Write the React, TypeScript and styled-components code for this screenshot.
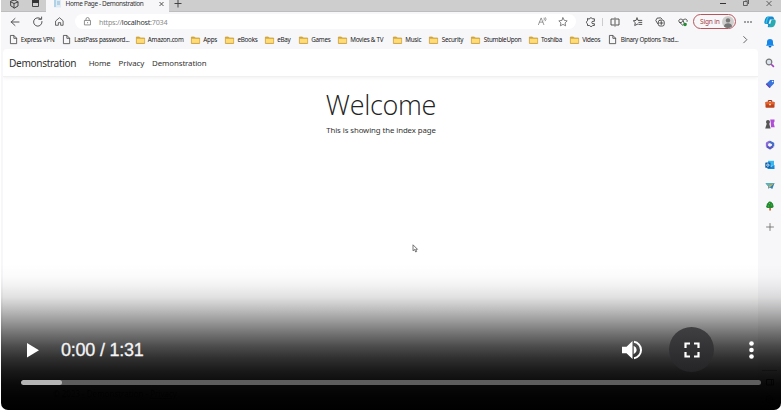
import React from "react";
import styled, { createGlobalStyle } from "styled-components";

const Global = createGlobalStyle`
  * { box-sizing: border-box; }
  body { margin: 0; background: #fff; font-family: "Noto Sans", "Open Sans", sans-serif; color: #333; }
  svg { display: block; flex: none; overflow: visible; }
`;

const Player = styled.div`
  position: relative;
  width: 780px;
  height: 410px;
  margin-left: 1px;
  overflow: hidden;
  border-radius: 0 0 7px 7px;
  background: #f7f7f9;
  display: flex;
  flex-direction: column;
`;
const TitleBar = styled.div`
  height: 12px;
  flex: none;
  display: flex;
  background: #cecece;
  border-bottom: 1px solid #bdbdbf;
`;
const TitleTools = styled.div`
  width: 45px;
  padding-left: 8px;
  display: flex;
  gap: 12px;
  height: 8px;
`;
const Tab = styled.div`
  width: 123px;
  height: 12px;
  padding: 0 5px 0 8px;
  display: flex;
  gap: 4.5px;
  background: #f7f7f9;
  font-size: 6.5px;
  line-height: 8px;
  white-space: nowrap;
`;
const TabTitle = styled.span`
  flex: 1;
  letter-spacing: -0.36px;
`;
const NewTab = styled.div`
  width: 30px;
  padding-left: 5px;
`;
const WindowButtons = styled.div`
  margin-left: auto;
  padding-right: 9px;
  display: flex;
  gap: 17px;
`;
const Columns = styled.div`
  flex: 1;
  min-height: 0;
  display: flex;
`;
const Main = styled.div`
  width: 757px;
  display: flex;
  flex-direction: column;
`;
const Toolbar = styled.div`
  height: 19px;
  flex: none;
  display: flex;
  align-items: center;
`;
const NavIcons = styled.div`
  width: 74px;
  padding-left: 9px;
  display: flex;
  gap: 12.5px;
`;
const Address = styled.div`
  width: 501px;
  height: 15px;
  border-radius: 8px;
  background: #fff;
  display: flex;
  align-items: center;
  padding: 0 8px;
  font-size: 7.2px;
  letter-spacing: -0.24px;
  color: #8b8b8b;
`;
const Url = styled.span`
  flex: 1;
  margin-left: 7px;
`;
const Host = styled.span`
  color: #333;
`;
const AddressTools = styled.div`
  display: flex;
  gap: 11px;
`;
const Tools = styled.div`
  width: 117px;
  padding-left: 10px;
  display: flex;
  align-items: center;
  gap: 12.5px;
`;
const Divider = styled.i`
  width: 1px;
  height: 8px;
  margin: 0 -5.5px 0 -6.5px;
  background: #ccc;
`;
const SignIn = styled.div`
  width: 43px;
  height: 15px;
  border: 1px solid #b5565d;
  border-radius: 8px;
  display: flex;
  align-items: center;
  justify-content: space-between;
  padding: 0 1px 0 6px;
  font-size: 6.6px;
  letter-spacing: -0.2px;
  color: #a64149;
  white-space: nowrap;
`;
const More = styled.div`
  margin-left: 8px;
`;
const Bookmarks = styled.div`
  height: 18px;
  flex: none;
  display: flex;
  align-items: center;
  padding: 0 0 1px 7.5px;
`;
const Bookmark = styled.div<{ $w: number }>`
  width: ${(p) => p.$w}px;
  flex: none;
  display: flex;
  align-items: center;
  gap: 3.3px;
  white-space: nowrap;
  font-size: 6.3px;
  letter-spacing: -0.28px;
  color: #222;
`;
const Page = styled.div`
  flex: 1;
  margin-left: 2px;
  border-radius: 4px 4px 0 0;
  background: #fff;
  overflow: hidden;
  display: flex;
  flex-direction: column;
`;
const Navbar = styled.div`
  height: 28px;
  flex: none;
  display: flex;
  align-items: center;
  gap: 8px;
  padding-left: 6px;
  border-bottom: 1px solid #f0f0f0;
  box-shadow: 0 1px 4px #00000010;
  font-size: 7.9px;
  letter-spacing: -0.12px;
  color: #333;
`;
const Brand = styled.span`
  font-size: 10.1px;
  letter-spacing: -0.34px;
  margin-right: 4.5px;
`;
const Heading = styled.h1`
  margin: 9.5px 0 0;
  padding-left: 1px;
  text-align: center;
  font: 300 27px/36px "Open Sans", "Noto Sans", sans-serif;
  letter-spacing: -0.3px;
  color: #222;
`;
const Lead = styled.p`
  margin: 1.5px 0 0;
  padding-left: 1px;
  text-align: center;
  font-size: 7.8px;
  line-height: 12px;
  letter-spacing: -0.08px;
`;
const Footer = styled.div`
  margin-top: auto;
  padding: 0 0 11px 50px;
  font-size: 8px;
`;
const Sidebar = styled.div`
  width: 23px;
  display: flex;
  flex-direction: column;
  align-items: center;
  gap: 10.4px;
  padding: 3.5px 0 6px;
`;
const SidebarFoot = styled.div`
  width: 15px;
  margin-top: auto;
  padding-top: 8px;
  border-top: 1px solid #aaa;
  display: flex;
  flex-direction: column;
  align-items: center;
  gap: 9px;
`;
const Pointer = styled.div`
  position: absolute;
  left: 411px;
  top: 244px;
`;
const Overlay = styled.div`
  position: absolute;
  inset: 0;
  display: flex;
  flex-direction: column;
  justify-content: flex-end;
  background: linear-gradient(
    to bottom,
    #0000 264px, #00000004 276px, #0000000e 286px, #0000001e 297px,
    #00000040 309px, #00000068 322px, #0000008e 334px, #000000b2 346px,
    #000000cf 358px, #000000e6 371px, #000000f5 384px, #000000fc 398px, #000 410px
  );
`;
const Controls = styled.div`
  height: 45px;
  display: flex;
  align-items: center;
  padding: 0 5px 0 26px;
`;
const Time = styled.div`
  flex: 1;
  margin-left: 21px;
  font: 18px/20px "Liberation Sans", Arial, sans-serif;
  color: #f4f4f4;
  -webkit-text-stroke: 0.3px #f4f4f4;
  letter-spacing: -0.22px;
`;
const Fullscreen = styled.div`
  width: 45px;
  height: 45px;
  margin: 0 35px 0 27px;
  border-radius: 50%;
  display: grid;
  place-items: center;
  background: linear-gradient(#404042, #242427);
`;
const Menu = styled.div`
  width: 27px;
`;
const Track = styled.div`
  height: 5px;
  margin: 8px 20px 25px;
  border-radius: 3px;
  background: #5e5e5e;
  overflow: hidden;
`;
const Buffered = styled.div`
  width: 41px;
  height: 5px;
  border-radius: 3px;
  background: #b5b5b5;
`;

const Line = ({ d, s = 10, c = "#444", w = 0.9 }: { d: string; s?: number; c?: string; w?: number }) => (
  <svg width={s} height={s} viewBox="0 0 10 10" fill="none" stroke={c} strokeWidth={w}>
    <path d={d} strokeLinecap="round" strokeLinejoin="round" />
  </svg>
);

const FileIcon = () => (
  <Line s={9} d="M2 .5h3.4L8.5 3.6v6H2zM5.4.7v3h3" />
);
const FolderIcon = () => (
  <svg width="9" height="8" viewBox="0 0 9 8">
    <path d="M.4 1h3l1 1h4.2v5.5H.4z" fill="#d9ad3a" stroke="#c49a34" strokeWidth=".7" />
    <path d="M.8 2.8h7.5v4.1H.8z" fill="#ffdc78" />
  </svg>
);

const bookmarks: { label: string; w: number; file?: boolean }[] = [
  { label: "Express VPN", w: 53.5, file: true },
  { label: "LastPass password...", w: 73.5, file: true },
  { label: "Amazon.com", w: 55.5 },
  { label: "Apps", w: 34.2 },
  { label: "eBooks", w: 39.8 },
  { label: "eBay", w: 34 },
  { label: "Games", w: 39 },
  { label: "Movies & TV", w: 55 },
  { label: "Music", w: 36.5 },
  { label: "Security", w: 42 },
  { label: "StumbleUpon", w: 57.3 },
  { label: "Toshiba", w: 41.2 },
  { label: "Videos", w: 38.5 },
  { label: "Binary Options Trad...", w: 133, file: true },
];

const sidebarIcons = [
  <svg width="12" height="12" viewBox="0 0 12 12">
    <path d="M5 .5h3c1.5 0 1.7 1 2 2l.3 1H7.5L6 9.5C5.6 11 5 11.3 3.5 11c1-1 .7-2 .2-3H2C0 8 .1 6 .7 4.5 1.5 2 2 .5 5 .5" fill="#168bd2" />
    <path d="M7.5 3.5H10c2 0 2 2 1.4 3.7C10.6 10 9.8 11.3 7.5 11.3h-4c2 0 2-1.7 2.4-3z" fill="#29a9b0" />
    <path d="M4.5 1.2C3 2 2.5 5.2 2.2 7.5" stroke="#35c4de" strokeWidth="1.4" fill="none" />
    <path d="m4.6 7.8 1.3-4.3h1.7L6.3 7.8z" fill="#e9faff" />
  </svg>,
  <svg width="10" height="10" viewBox="0 0 10 10">
    <path d="M1 7.8 2 6V4a3 3 0 0 1 6 0v2l1 1.8z" fill="#1687ea" />
    <path d="M3.5 8h3c-.3 2-2.7 2-3 0" fill="#0865c1" />
  </svg>,
  <svg width="10" height="10" viewBox="0 0 10 10" fill="none">
    <circle cx="4" cy="4" r="2.8" fill="#d9e4ee" stroke="#777" strokeWidth="1.2" />
    <path d="m6.2 6.2 2.7 2.7" stroke="#a33ac5" strokeWidth="1.6" />
  </svg>,
  <svg width="10" height="10" viewBox="0 0 10 10">
    <path d="M5.2 1H9v3.6L4.6 9 .8 5.2z" fill="#3976dc" />
    <path d="m.8 5.2 1-1L5.7 8l-1.1 1z" fill="#6847bb" /><circle cx="7.6" cy="2.5" r=".8" fill="#fff" />
  </svg>,
  <svg width="10" height="10" viewBox="0 0 10 10">
    <path d="M3.3 3V1.5h3.4V3" fill="none" stroke="#9d3518" />
    <rect x=".5" y="2.8" width="9" height="6" rx=".8" fill="#bd431e" />
    <path d="M.5 3h9v2.4h-9z" fill="#e26330" /><path d="M4 4.8h2v1.4H4z" fill="#ffd096" />
  </svg>,
  <svg width="10" height="10" viewBox="0 0 10 10">
    <path d="M5.2.5h4.3v2L8.7 4l1 4.2H6L5.8 4z" fill="#b04ed7" />
    <circle cx="3" cy="3" r="2" fill="#555" /><path d="M2 4h2l1.6 5.5H.2z" fill="#555" />
  </svg>,
  <svg width="10" height="10" viewBox="0 0 10 10" fill="none" strokeWidth="2.3" strokeLinejoin="round">
    <path d="M2 6.8V3.3L5 1.6" stroke="#8b6bd8" /><path d="m4.6 1.7 3.5 1.8v3" stroke="#466fc7" /><path d="M8 6.3 5 8.3 1.9 6.5" stroke="#5657c1" />
  </svg>,
  <svg width="10" height="10" viewBox="0 0 10 10">
    <path d="M3 .8h6v5H3z" fill="#39b7ef" /><path d="M2.5 5 6 6.8 9.5 5v4h-7z" fill="#1688d7" />
    <rect x=".3" y="2.5" width="5.2" height="5.2" rx=".5" fill="#075da9" /><circle cx="2.9" cy="5.1" r="1.2" fill="none" stroke="#fff" strokeWidth=".8" />
  </svg>,
  <svg width="10" height="10" viewBox="0 0 10 10">
    <path d="M.5 2.2 9.5 2 7.3 8 4.7 6.5 3.5 8 3 5z" fill="#2484c2" />
    <path d="m.5 2.2 9-.2L3 5z" fill="#5bb5bd" /><path d="M9.5 2 4.7 6.5 3 5z" fill="#dfae43" />
  </svg>,
  <svg width="10" height="10" viewBox="0 0 10 10">
    <path d="M4.3 5.5h1.6v4H4.3z" fill="#b46225" />
    <path d="M5 .5c1.4 0 2 .8 2 1.6 1 .3 1.4 1.1 1.1 2 1 1 .6 2.8-1 2.8H2.5C.9 6.7.7 5.1 1.8 4 1.5 3 2 2.2 3 2 3 1.1 3.8.5 5 .5" fill="#218a32" />
    <path d="M4 2.5h1M5.8 4h1M3 5h1" stroke="#69bd3d" />
  </svg>,
  <Line d="M5 2.5v7M1.5 6h7" c="#666" w={0.8} />,
];

export default function App() {
  return (
    <>
      <Global />
      <Player>
        <TitleBar>
          <TitleTools>
            <Line d="m2 1 4-1 3 2v4L5.5 8 2 6zM2 2l3 1.5L9 2M5 3.5V8" w={1} />
            <svg width="10" height="8"><path d="M1.5 0h6v6.5h-6z" fill="none" stroke="#444" /><path d="M1 0h7v3H1z" fill="#333" /></svg>
          </TitleTools>
          <Tab>
            <svg width="7" height="8"><path d="M0 0h7v7.5H0z" fill="#dfeaf2" /><path d="M1 0v7M3 2h3M3 4h3" stroke="#82b8da" /></svg>
            <TabTitle>Home Page - Demonstration</TabTitle>
            <svg width="5" height="8"><path d="m.5 2 4 4m0-4-4 4" stroke="#444" strokeWidth=".9" /></svg>
          </Tab>
          <NewTab><svg width="8" height="8"><path d="M4 0v7.5M.5 3.5h7" stroke="#444" /></svg></NewTab>
          <WindowButtons>
            <svg width="6" height="8"><path d="M0 3.5h6" stroke="#333" /></svg>
            <svg width="6" height="8"><path d="M.5 1.5h3.8v4H.5zM2 0h3.5v4" stroke="#444" fill="none" strokeWidth=".8" /></svg>
            <svg width="6" height="8"><path d="m.5 1 5 5m0-5-5 5" stroke="#444" strokeWidth=".8" /></svg>
          </WindowButtons>
        </TitleBar>
        <Columns>
          <Main>
            <Toolbar>
              <NavIcons>
                <Line d="M9 5H1.2M5 1.5 1.2 5 5 8.5" />
                <Line d="M9 4.5A4.2 4.2 0 1 1 7.5 1.7M5.8 2.3H8.6V0" />
                <Line d="M1 4.2 5 .8l4 3.4v5H6.3V6.3H3.7v2.9H1z" s={9} />
              </NavIcons>
              <Address>
                <Line d="M2 3.8h6.3v5H2zM3.3 3.6V2.4a1.8 1.8 0 0 1 3.6 0v1.2M5.1 6v.5" s={9} c="#777" />
                <Url>https://<Host>localhost</Host>:7034</Url>
                <AddressTools>
                  <Line d="M.5 8.5 3.5 1l3 7.5M1.7 5.7h3.7M6.8 1.2q1.2 1 0 2.3M8.2.5q2 1.8 0 3.8" s={9} c="#777" w={0.8} />
                  <Line d="m5 .8 1.3 2.6 2.9.5-2.1 2 .5 2.9L5 7.4 2.4 8.8l.5-2.9-2.1-2 2.9-.5z" c="#666" w={0.8} />
                </AddressTools>
              </Address>
              <Tools>
                <Line d="M3.4 1.8a1.6 1.6 0 0 1 3 0h2v2.5H7a1.2 1.2 0 0 0 0 2.4h1.4v1.8H6.6a1.6 1.6 0 0 1-3 0H1.5V6.8a1.6 1.6 0 0 1 0-3v-2z" />
                <Divider />
                <Line d="M5 .8v8.4M4 2H1v6h3M6 2h3v6H6" />
                <Line d="m4 1 1 2.4h3.8M5.8 5.4h3M5.8 7.4h3M4 1 3 3.4l-2.7.4 2 1.9-.6 2.8L4.8 7" />
                <Line d="M2.6 6.6.8 3.5 2 1.2l3.7-.4L7 2.2M5 3.2h2.5q1.7 0 1.7 1.7v2.4q0 1.7-1.7 1.7H5Q3.3 9 3.3 7.3V4.9Q3.3 3.2 5 3.2M4.7 6h3.1M6.25 4.5v3" />
                <svg width="10" height="10"><path d="M5 8.5 1 4.8c-1-2 1.6-4 4-1.6 2.4-2.4 5-.4 4 1.6M1.5 5.5h2L5 3.5l1.3 3h2" stroke="#444" fill="none" strokeWidth=".9" /><circle cx="7" cy="7.5" r="1.8" fill="#248d35" /></svg>
              </Tools>
              <SignIn>
                Sign in
                <svg width="12" height="12"><circle cx="6" cy="6" r="6" fill="#d0cdcd" /><circle cx="6" cy="4.4" r="2.2" fill="#777" /><path d="M2 10.4c0-4.2 8-4.2 8 0Q6 13.5 2 10.4" fill="#777" /></svg>
              </SignIn>
              <More><svg width="8" height="4" fill="#333"><circle cx="1" cy="2" r=".8" /><circle cx="4" cy="2" r=".8" /><circle cx="7" cy="2" r=".8" /></svg></More>
            </Toolbar>
            <Bookmarks>
              {bookmarks.map((b) => (
                <Bookmark key={b.label} $w={b.w}>
                  {b.file ? <FileIcon /> : <FolderIcon />}
                  {b.label}
                </Bookmark>
              ))}
              <Line d="m3 1.7 3.5 3.5L3 8.7" s={9} />
            </Bookmarks>
            <Page>
              <Navbar><Brand>Demonstration</Brand><span>Home</span><span>Privacy</span><span>Demonstration</span></Navbar>
              <Heading>Welcome</Heading>
              <Lead>This is showing the index page</Lead>
              <Footer>© 2023 - Demonstration - <u>Privacy</u></Footer>
            </Page>
          </Main>
          <Sidebar>
            {sidebarIcons.map((icon, i) => <React.Fragment key={i}>{icon}</React.Fragment>)}
            <SidebarFoot>
              <svg width="8" height="7"><path d="M.5.5h7v5.5h-7zM5.5.5V6" fill="none" stroke="#333" /></svg>
              <Line d="M5 .8 8.5 2.8v4.4L5 9.2 1.5 7.2V2.8zM5 3.6a1.4 1.4 0 1 1 0 2.8 1.4 1.4 0 0 1 0-2.8" s={9} />
            </SidebarFoot>
          </Sidebar>
        </Columns>
        <Pointer><svg width="7" height="9"><path d="M1 .8v6l1.5-1.4L3.7 8l1-.5-1-2.2h1.8z" fill="#fff" stroke="#555" strokeWidth=".8" /></svg></Pointer>
        <Overlay>
          <Controls>
            <svg width="13" height="16"><path d="M0 1v14.5L12 8.2z" fill="#fff" /></svg>
            <Time>0:00 / 1:31</Time>
            <svg width="20" height="20" viewBox="0 0 20 20" fill="#fff"><path d="M0 6.8h4.5L10.5 1v18l-6-5.8H0z" /><path d="M11.7 5.7v8.6q3-1.5 3-4.3t-3-4.3" /><path d="M12 1.8a8.3 8.3 0 0 1 0 16.4" fill="none" stroke="#fff" strokeWidth="2" /></svg>
            <Fullscreen><svg width="16" height="16" fill="none" stroke="#fff" strokeWidth="2.2"><path d="M1.5 6V1.5H6M10 1.5h4.5V6M14.5 10v4.5H10M6 14.5H1.5V10" /></svg></Fullscreen>
            <Menu><svg width="5" height="18" fill="#fff"><circle cx="2.5" cy="2.5" r="2.3" /><circle cx="2.5" cy="9" r="2.3" /><circle cx="2.5" cy="15.5" r="2.3" /></svg></Menu>
          </Controls>
          <Track><Buffered /></Track>
        </Overlay>
      </Player>
    </>
  );
}
